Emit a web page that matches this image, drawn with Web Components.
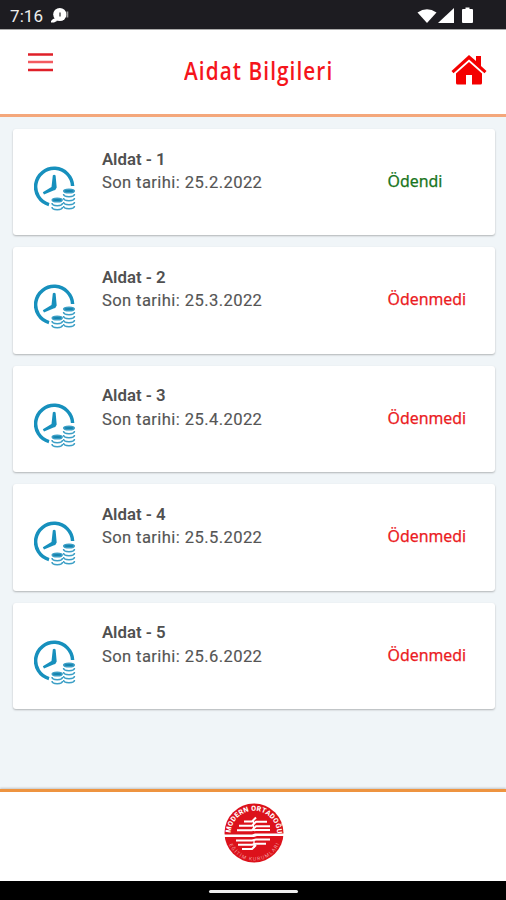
<!DOCTYPE html>
<html lang="tr"><head><meta charset="utf-8"><title>Aidat Bilgileri</title>
<style>html,body{margin:0;height:100%;overflow:hidden}body{font-family:Roboto,sans-serif}</style></head>
<body><dues-screen></dues-screen>
<script>
const define=(name,html,setup)=>customElements.define(name,class extends HTMLElement{
  constructor(){super();this.attachShadow({mode:'open'}).innerHTML=html;}
  connectedCallback(){if(setup)setup(this,this.shadowRoot);}
});

define('status-bar',`<style>
:host{display:flex;box-sizing:border-box;height:29px;background:#1d1c21;color:#eee;align-items:center;padding:2px 31px 0 10px;font-size:17px}
span{width:34px;letter-spacing:.1px}svg{display:block}.n{margin-left:7px}.s{margin-left:auto}
</style><span>7:16</span>
<svg class="n" width="19" height="18" viewBox="0 0 19 18"><circle cx="8.800" cy="7.500" r="6.600" fill="#fff"/><path d="M0 14l2-2 3-1 1 3-3 1.500H0z" fill="#fff"/><path d="M9 5.500v4" stroke="#555" stroke-width="1.500"/><path d="M16.400 4.500v6" stroke="#999" stroke-width="1.800"/></svg>
<svg class="s" width="58" height="20" viewBox="0 0 58 20"><g fill="#fff"><path d="M.5 6.500Q10 0 19.500 6.500L10 17z"/><path d="M37 2v15H21z"/><path d="M46 3h2.500V1.500h4V3H55q1 0 1 1v12q0 1-1 1h-9q-1 0-1-1V4q0-1 1-1z"/></g></svg>`);

define('app-header',`<style>
:host{display:flex;box-sizing:border-box;height:88px;background:#fff;border-top:1px solid #aaa;border-bottom:3px solid #f4a77b;padding:0 19px 0 28px;justify-content:space-between;align-items:flex-start}
svg{display:block}.m{margin-top:23px}.h{margin-top:25px}
h1{margin:21px 0 0 14px;width:151px;height:38px;font:600 25px/38px "Open Sans",sans-serif;letter-spacing:1.300px;color:#f5151b;white-space:nowrap}
h1 span{display:inline-block;transform-origin:0 50%;transform:scaleX(.83)}
</style><svg class="m" width="25" height="20" viewBox="0 0 25 20" fill="none" stroke-width="2.500"><path d="M0 1.500h25M0 17h25" stroke="#df2029"/><path d="M0 9h25" stroke="#f35b60"/></svg>
<h1><span><slot></slot></span></h1>
<svg class="h" width="36" height="31" viewBox="0 0 36 31" fill="#f40000"><path d="M18 0L25 6V1h5v10l5.500 5-2 2.300L18 4.500 2.500 18.300.5 16z"/><path d="M18 7L5 18.500V28q0 1.500 1.500 1.500H15V20h6v9.500h8.500Q31 29.500 31 28v-9.500z"/></svg>`);

define('clock-coins',`<style>:host{display:block;width:42px;height:45px}svg{display:block}</style>
<svg width="42" height="45" viewBox="0 0 42 45"><path d="M38.600 20A18.500 18.500 0 1 0 15 38.600" fill="none" stroke="#1790bd" stroke-width="3.500"/><path d="M18.800 9.500Q20 8 21.600 9.500L22.700 21.500Q22 24 19.500 24.500L10 28.500 8.800 26.300 17.500 21z" fill="#1790bd"/>
<g fill="#fff" stroke="#3c9fc6" stroke-width="1.500"><path d="M29.500 25v16c0 2.500 11 2.500 11 0V25z" stroke="none"/><path d="M29.500 40c0 3.500 11 3.500 11 0M29.500 36c0 3.500 11 3.500 11 0M29.500 32c0 3.500 11 3.500 11 0M29.500 28c0 3.500 11 3.500 11 0"/><ellipse cx="35" cy="25" rx="5.300" ry="1.800" fill="#1683ad"/><path d="M18 34v8c0 2.500 10.500 2.500 10.500 0v-8z" stroke="none"/><path d="M18 41c0 3.500 10.500 3.500 10.500 0M18 37c0 3.500 10.500 3.500 10.500 0"/><ellipse cx="23.200" cy="34" rx="5" ry="1.800" fill="#1683ad"/></g></svg>`);

define('due-card',`<style>
:host{display:flex;box-sizing:border-box;height:106.200px;background:#fff;border-radius:3px;box-shadow:0 1px 2px #0004;padding:0 0 0 20.500px;align-items:flex-start;color:#555;font-size:16.600px}
clock-coins{margin-top:37px}.b{margin:17.500px 0 0 26.400px;width:285.600px;line-height:24.500px}
b,span{display:block}b{font-weight:600;color:#505050;font-size:16.800px}.d{letter-spacing:.4px;-webkit-text-stroke:.15px}
.s{margin-top:39.800px;font:400 15.900px/25px "Noto Sans",sans-serif;color:#eb1b23;-webkit-text-stroke:.25px}
:host([paid]) .s{color:#18751c}
</style><clock-coins></clock-coins><div class="b"><b><slot></slot></b><span class="d"><slot name="date"></slot></span></div><div class="s"><slot name="status"></slot></div>`);

define('school-logo',`<style>:host{display:block;width:60px;height:60px}svg{display:block}text{font-family:Roboto,sans-serif;fill:#fff}</style>
<svg width="60" height="60" viewBox="0 0 60 60"><defs><path id="top" d="M6.800 31A23.200 23.200 0 0 1 53.200 31"/><path id="bottom" d="M3.500 37A27.300 27.300 0 0 0 56.500 37"/></defs><circle cx="30" cy="30" r="29.500" fill="#dc121b"/><path d="M0 31.400h28l3-1h29v2.600H33l-3 1H0z" fill="#fff"/>
<g fill="none" stroke="#fff" stroke-width="2" stroke-linejoin="round"><path d="M20 18.500h8l4-4M15 22.700h13l4-4h11M13 27.200h15l4-4h14M30 27.200l2-.2h14M12 37.500h16l4-1h14M14 41.700h14l4-1h10M18 46h10l4-4"/><path d="M29.500 18v10M30 37v8" stroke-width="1.300"/></g>
<text font-size="7" font-weight="800"><textPath href="#top" startOffset="1" textLength="71">MODERN ORTADOĞU</textPath></text>
<text font-size="5" style="fill:#f19b9e"><textPath href="#bottom" startOffset="5" textLength="63">EĞİTİM KURUMLARI</textPath></text></svg>`);

define('app-footer',`<style>:host{display:flex;box-sizing:border-box;height:92px;background:#fff;border-top:3px solid #ee9440;justify-content:center;padding:11px 0 0 2px;box-shadow:0 -1px 2px #0003}</style><school-logo></school-logo>`);
define('nav-bar',`<style>:host{display:flex;height:19px;background:#000;justify-content:center;align-items:center}i{display:block;width:89px;height:3px;border-radius:2px;background:#eee;margin:2px 0 0 1px}</style><i></i>`);

define('dues-screen',`<style>
:host{display:flex;flex-direction:column;height:900px;background:#f0f5f8}
main{flex:1;min-height:0;display:flex;flex-direction:column;gap:12.300px;padding:12px 11px 0 13px}
</style><status-bar></status-bar><app-header>Aidat Bilgileri</app-header><main></main><app-footer></app-footer><nav-bar></nav-bar>`,(host,root)=>{
  root.querySelector('main').innerHTML=[2,3,4,5,6].map((m,i)=>`<due-card ${i?'':'paid'}>Aldat - ${i+1}<span slot="date">Son tarihi: 25.${m}.2022</span><span slot="status">${i?'Ödenmedi':'Ödendi'}</span></due-card>`).join('');
});
</script></body></html>
